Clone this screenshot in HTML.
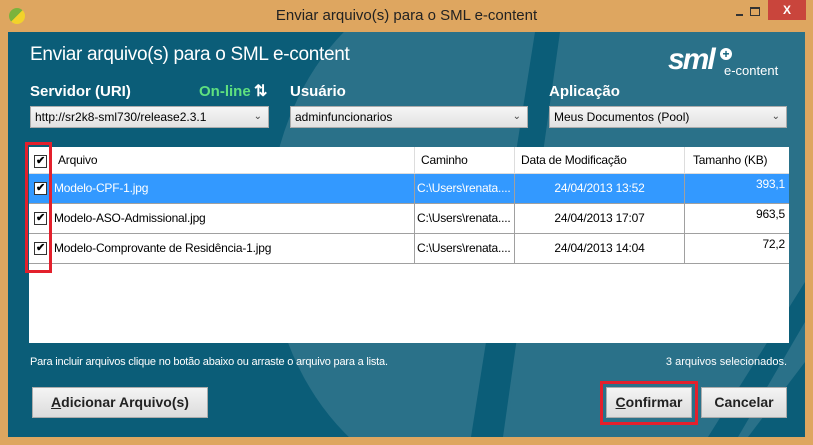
<!DOCTYPE html>
<html style="overflow:hidden;height:445px"><head><style>
body{margin:0;width:813px;height:445px;overflow:hidden;background:#dea660;font-family:"Liberation Sans",sans-serif;position:relative}
.abs{position:absolute}
.lbl{position:absolute;color:#fff;font-weight:bold;font-size:15px}
.sel{position:absolute;height:22px;background:linear-gradient(#f6f6f6,#e2e2e2);border:1px solid #acacac;font-size:12px;line-height:20px;padding-left:4px;box-sizing:border-box;color:#000}
.sel span{position:absolute;right:6px;top:0;font-size:10px;color:#444}
.row{position:absolute;left:0;width:760px;height:29px;border-bottom:1px solid #a0a0a0;line-height:29px;font-size:12px;letter-spacing:-0.2px}
.cb{position:absolute;left:5px;top:8px;width:11px;height:11px;border:1px solid #333;background:#fff;font-size:11px;line-height:11px;text-align:center;font-weight:bold;color:#000}
.c{position:absolute;top:0;height:100%;box-sizing:border-box;white-space:nowrap;overflow:hidden}
.btn{position:absolute;background:linear-gradient(#f4f4f4,#dcdcdc);border:1px solid #acacac;font-size:14px;font-weight:bold;color:#222;text-align:center;line-height:29px;box-sizing:border-box;height:31px}
</style></head><body>
<div class="abs" style="left:9px;top:8px;width:16px;height:16px;border-radius:50%;background:linear-gradient(135deg,#7bb33c 50%,#f2d22a 50%)"></div>
<div class="abs" style="left:0;top:7px;width:813px;text-align:center;font-size:15px;color:#222">Enviar arquivo(s) para o SML e-content</div>
<div class="abs" style="left:736px;top:14px;width:7px;height:2px;background:#333"></div>
<div class="abs" style="left:750px;top:7px;width:8px;height:6px;border:1px solid #333;border-top-width:2px"></div>
<div class="abs" style="left:768px;top:0;width:38px;height:20px;background:#c9453c;color:#fff;font-size:12px;text-align:center;line-height:20px;font-weight:bold">X</div>

<div class="abs" style="left:8px;top:32px;width:797px;height:405px;background:#0b5d78;overflow:hidden">
<svg width="797" height="405" style="position:absolute;left:0;top:0">
<ellipse cx="470" cy="200" rx="210" ry="260" fill="#2a7189"/>
<path d="M530 0 L 797 0 L 797 330 L 740 405 L 500 405 Z" fill="#2a7189"/>
<path d="M527 0 L 552 0 L 495 405 L 463 405 Z" fill="#0b5d78"/>
<path d="M700 405 L 730 405 L 797 290 L 797 250 Z" fill="#0b5d78"/>
</svg>
</div>
<div class="abs" style="left:30px;top:44px;color:#fff;font-size:19px;letter-spacing:-0.3px">Enviar arquivo(s) para o SML e-content</div>
<div class="abs" style="left:668px;top:43px;color:#fff;font-size:30px;font-weight:bold;font-style:italic;letter-spacing:-2px">sml</div>
<div class="abs" style="left:720px;top:48px;width:12px;height:12px;border-radius:50%;background:#fff;color:#0b5d78;font-size:12px;line-height:12px;text-align:center;font-weight:bold">+</div>
<div class="abs" style="left:724px;top:63px;color:#fff;font-size:13px">e-content</div>

<div class="lbl" style="left:30px;top:83px">Servidor (URI)</div>
<div class="lbl" style="left:199px;top:83px;color:#5fe07f">On-line</div>
<div class="lbl" style="left:254px;top:81px;font-size:16px">⇅</div>
<div class="lbl" style="left:290px;top:83px">Usuário</div>
<div class="lbl" style="left:549px;top:83px">Aplicação</div>
<div class="sel" style="left:30px;top:106px;width:239px">http://sr2k8-sml730/release2.3.1<span>⌄</span></div>
<div class="sel" style="left:290px;top:106px;width:238px">adminfuncionarios<span>⌄</span></div>
<div class="sel" style="left:549px;top:106px;width:238px">Meus Documentos (Pool)<span>⌄</span></div>

<div class="abs" style="left:29px;top:147px;width:760px;height:196px;background:#fff">
 <div class="row" style="top:0;height:26px;line-height:26px;border-bottom:1px solid #ddd">
  <div class="cb">✔</div><div class="c" style="left:29px">Arquivo</div>
  <div class="c" style="left:385px;border-left:1px solid #ddd;padding-left:6px">Caminho</div>
  <div class="c" style="left:485px;border-left:1px solid #ddd;padding-left:6px">Data de Modificação</div>
  <div class="c" style="left:655px;border-left:1px solid #ddd;padding-left:8px">Tamanho (KB)</div>
 </div>
 <div class="row" style="top:27px;background:#3399ff;color:#fff">
  <div class="cb">✔</div><div class="c" style="left:25px">Modelo-CPF-1.jpg</div>
  <div class="c" style="left:385px;width:100px;border-left:1px solid #a0a0a0;padding-left:2px">C:\Users\renata....</div>
  <div class="c" style="left:485px;border-left:1px solid #a0a0a0;width:170px;text-align:center">24/04/2013 13:52</div>
  <div class="c" style="left:655px;border-left:1px solid #a0a0a0;width:105px;text-align:right;padding-right:4px;line-height:20px">393,1</div>
 </div>
 <div class="row" style="top:57px">
  <div class="cb">✔</div><div class="c" style="left:25px">Modelo-ASO-Admissional.jpg</div>
  <div class="c" style="left:385px;width:100px;border-left:1px solid #a0a0a0;padding-left:2px">C:\Users\renata....</div>
  <div class="c" style="left:485px;border-left:1px solid #a0a0a0;width:170px;text-align:center">24/04/2013 17:07</div>
  <div class="c" style="left:655px;border-left:1px solid #a0a0a0;width:105px;text-align:right;padding-right:4px;line-height:20px">963,5</div>
 </div>
 <div class="row" style="top:87px">
  <div class="cb">✔</div><div class="c" style="left:25px">Modelo-Comprovante de Residência-1.jpg</div>
  <div class="c" style="left:385px;width:100px;border-left:1px solid #a0a0a0;padding-left:2px">C:\Users\renata....</div>
  <div class="c" style="left:485px;border-left:1px solid #a0a0a0;width:170px;text-align:center">24/04/2013 14:04</div>
  <div class="c" style="left:655px;border-left:1px solid #a0a0a0;width:105px;text-align:right;padding-right:4px;line-height:20px">72,2</div>
 </div>
</div>
<div class="abs" style="left:25px;top:142px;width:21px;height:125px;border:3px solid #e3202c"></div>

<div class="abs" style="left:30px;top:356px;color:#fff;font-size:11px;letter-spacing:-0.2px">Para incluir arquivos clique no botão abaixo ou arraste o arquivo para a lista.</div>
<div class="abs" style="left:600px;top:356px;width:187px;text-align:right;color:#fff;font-size:11px">3 arquivos selecionados.</div>
<div class="btn" style="left:32px;top:387px;width:176px"><u>A</u>dicionar Arquivo(s)</div>
<div class="btn" style="left:606px;top:387px;width:86px"><u>C</u>onfirmar</div>
<div class="btn" style="left:701px;top:387px;width:86px">Cancelar</div>
<div class="abs" style="left:600px;top:381px;width:92px;height:38px;border:3px solid #e3202c"></div>
</body></html>
